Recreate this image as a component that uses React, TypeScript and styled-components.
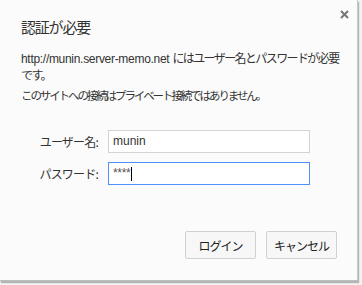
import React from "react";
import styled, { createGlobalStyle } from "styled-components";

const Global = createGlobalStyle`
  html, body { margin: 0; padding: 0; background: #f2f2f2; }
  body { font-family: "Noto Sans CJK JP", "Noto Sans", sans-serif; }
`;

const Page = styled.div`
  width: 362px;
  height: 285px;
  background: #f2f2f2;
  overflow: hidden;
`;

const Dialog = styled.div`
  width: 358px;
  height: 281px;
  box-sizing: border-box;
  background: #fbfbfb;
  border-right: 1px solid #c9c9c9;
  border-bottom: 1px solid #bdbdbd;
  box-shadow: 1px 2px 1px rgba(0,0,0,0.25);
  position: relative;
  display: flex;
  flex-direction: column;
  padding: 15px 20px 0 21px;
  color: #333;
`;

const Close = styled.div`
  position: absolute;
  top: 10px;
  right: 8px;
  width: 9px;
  height: 9px;
  line-height: 0;
`;

const Title = styled.h1`
  margin: 0;
  font-size: 15px;
  font-weight: 400;
  line-height: 24px;
  color: #333;
  letter-spacing: -1.2px;
`;

const Message = styled.p`
  margin: 11px 0 0 0;
  font-size: 12px;
  line-height: 16px;
  color: #333;
  font-family: "Noto Sans CJK JP", sans-serif;
  letter-spacing: -1.6px;
  white-space: nowrap;
`;

const Url = styled.span`
  font-family: "Liberation Sans", Arial, sans-serif;
  font-size: 12px;
  letter-spacing: -0.3px;
`;

const Note = styled.p`
  margin: 4px 0 0 0;
  font-size: 11.5px;
  line-height: 16px;
  color: #333;
  letter-spacing: -2.1px;
  white-space: nowrap;
`;

const Form = styled.div`
  display: grid;
  grid-template-columns: 77px 202px;
  column-gap: 10px;
  row-gap: 9px;
  margin-top: 27px;
  align-items: center;
`;

const Label = styled.label`
  font-size: 12px;
  text-align: right;
  color: #333;
  letter-spacing: -0.8px;
`;

const Input = styled.div<{ $focused?: boolean }>`
  height: 23px;
  box-sizing: border-box;
  border: 1px solid ${(p) => (p.$focused ? "#4d90fe" : "#d3d3d3")};
  background: #fff;
  font-family: "Liberation Sans", Arial, sans-serif;
  font-size: 12px;
  line-height: 21px;
  padding-left: 4px;
  color: #333;
  display: flex;
  align-items: center;
`;

const Stars = styled.span`
  color: #555;
  font-size: 12px;
  letter-spacing: -0.3px;
`;

const Caret = styled.span`
  display: inline-block;
  width: 1px;
  height: 14px;
  background: #000;
  margin-left: 1px;
`;

const Buttons = styled.div`
  margin-top: auto;
  margin-bottom: 21px;
  display: flex;
  justify-content: flex-end;
  gap: 10px;
`;

const Button = styled.button`
  width: 71px;
  height: 28px;
  box-sizing: border-box;
  border: 1px solid #d0d0d0;
  border-radius: 2px;
  background: #f7f7f7;
  font-family: "Noto Sans CJK JP", sans-serif;
  font-size: 12px;
  letter-spacing: -1px;
  color: #222;
  padding: 0;
`;

export default function App() {
  return (
    <Page>
      <Global />
      <Dialog>
        <Close>
          <svg width="9" height="9" viewBox="0 0 9 9">
            <path d="M1 1 L8 8 M8 1 L1 8" stroke="#777" strokeWidth="2" />
          </svg>
        </Close>
        <Title>認証が必要</Title>
        <Message>
          <Url>http://munin.server-memo.net </Url>にはユーザー名とパスワードが必要
          <br />
          です。
        </Message>
        <Note>このサイトへの接続はプライベート接続ではありません。</Note>
        <Form>
          <Label>ユーザー名:</Label>
          <Input>munin</Input>
          <Label>パスワード:</Label>
          <Input $focused>
            <Stars>****</Stars>
            <Caret />
          </Input>
        </Form>
        <Buttons>
          <Button>ログイン</Button>
          <Button>キャンセル</Button>
        </Buttons>
      </Dialog>
    </Page>
  );
}
